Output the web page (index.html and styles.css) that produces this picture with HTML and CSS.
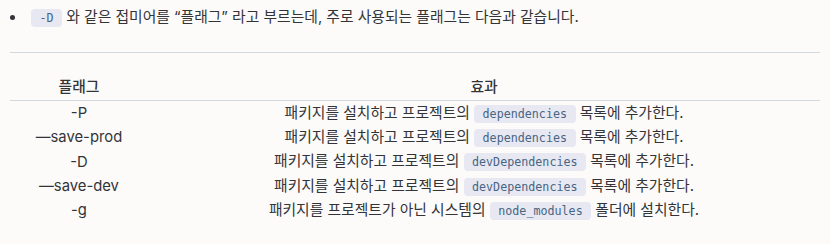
FILE: index.html
```html
<!DOCTYPE html>
<html lang="ko">
<head>
<meta charset="utf-8">
<link rel="stylesheet" href="styles.css">
</head>
<body>
<div class="page">
  <ul class="list">
    <li class="item"><span class="dot"></span><span class="line"><code class="code">-D</code> 와 같은 접미어를 “플래그” 라고 부르는데, 주로 사용되는 플래그는 다음과 같습니다.</span></li>
  </ul>
  <hr class="rule">
  <table class="flags">
    <thead>
      <tr><th class="c1">플래그</th><th class="c2">효과</th></tr>
    </thead>
    <tbody>
      <tr><td>-P</td><td>패키지를 설치하고 프로젝트의 <code class="code">dependencies</code> 목록에 추가한다.</td></tr>
      <tr><td>—save-prod</td><td>패키지를 설치하고 프로젝트의 <code class="code">dependencies</code> 목록에 추가한다.</td></tr>
      <tr><td>-D</td><td>패키지를 설치하고 프로젝트의 <code class="code">devDependencies</code> 목록에 추가한다.</td></tr>
      <tr><td>—save-dev</td><td>패키지를 설치하고 프로젝트의 <code class="code">devDependencies</code> 목록에 추가한다.</td></tr>
      <tr><td>-g</td><td>패키지를 프로젝트가 아닌 시스템의 <code class="code">node_modules</code> 폴더에 설치한다.</td></tr>
    </tbody>
  </table>
</div>
</body>
</html>
```
FILE: styles.css
```css
html, body {
  margin: 0;
  padding: 0;
  background: #fcfbfa;
}
body {
  font-family: Inter, "Noto Sans CJK KR", sans-serif;
  font-size: 14.8px;
  color: #333438;
}
.page {
  padding: 5px 10px 0 10px;
}
.list {
  list-style: none;
  margin: 0;
  padding: 0;
}
.item {
  display: flex;
  align-items: center;
  line-height: 24px;
}
.dot {
  width: 5px;
  height: 5px;
  border-radius: 50%;
  background: #333438;
  margin-left: 0;
  margin-right: 16px;
  flex: none;
}
.code {
  font-family: "DejaVu Sans Mono", monospace;
  font-size: 11.7px;
  color: #476582;
  background: #e8e8f3;
  border-radius: 4px;
  padding: 2px 8.5px;
}
.rule {
  border: 0;
  border-top: 1px solid #d3d8df;
  margin: 22px 0 21px 0;
}
.flags {
  width: 810px;
  border-collapse: collapse;
}
.flags th {
  font-weight: 500;
  line-height: 20px;
  padding: 3px 0;
  border-bottom: 1px solid #d3d8df;
  text-align: center;
}
.c1 {
  width: 138px;
}
.flags td {
  text-align: center;
  line-height: 20px;
  height: 24.3px;
  padding: 0;
}
```
